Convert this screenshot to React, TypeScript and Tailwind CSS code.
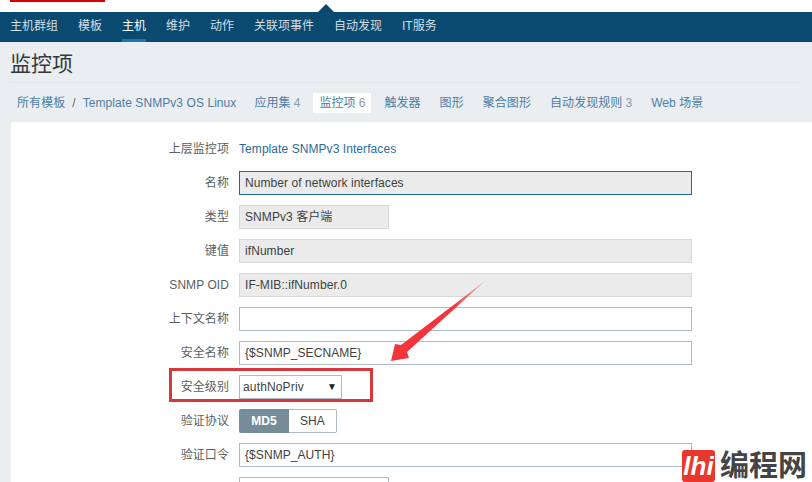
import React from "react";

const font = { fontFamily: '"Liberation Sans", "Noto Sans CJK SC", sans-serif' };

const nav = [
  { t: "主机群组", w: "w-[48px]", ml: "ml-[10px]" },
  { t: "模板", w: "w-[24px]", ml: "ml-[20px]" },
  { t: "主机", w: "w-[24px]", ml: "ml-[20px]", active: true },
  { t: "维护", w: "w-[24px]", ml: "ml-[20px]" },
  { t: "动作", w: "w-[24px]", ml: "ml-[20px]" },
  { t: "关联项事件", w: "w-[60px]", ml: "ml-[20px]" },
  { t: "自动发现", w: "w-[48px]", ml: "ml-[20px]" },
  { t: "IT服务", w: "w-[36px]", ml: "ml-[20px]" },
];

function Tab({ name, count, active }: { name: string; count?: string; active?: boolean }) {
  return (
    <span className={`flex h-[20px] items-center px-[6px] whitespace-nowrap ${active ? "bg-white" : ""}`}>
      <span className="text-[#4d7da5]">{name}</span>
      {count && <span className="ml-[3px] text-[#8a9aa6]">{count}</span>}
    </span>
  );
}

function Row({ label, children }: { label: string; children: React.ReactNode }) {
  return (
    <div className="flex h-[34px] items-center">
      <div className="w-[218px] shrink-0 text-right text-[#5a5f62]">{label}</div>
      <div className="ml-[10px] flex-1">{children}</div>
    </div>
  );
}

function Field({ value, w = "w-[453px]", ro, focus }: { value?: string; w?: string; ro?: boolean; focus?: boolean }) {
  return (
    <div
      className={`flex h-[24px] ${w} items-center border px-[5px] text-[#3b3f42] ${
        focus ? "border-[#1f6a96] bg-[#ebebeb]" : ro ? "border-[#d8d8d8] bg-[#ebebeb]" : "border-[#acbbc2] bg-white"
      }`}
    >
      {value}
    </div>
  );
}

export default function App() {
  return (
    <div className="relative h-[482px] w-[812px] overflow-hidden bg-white text-[12px] tracking-[0.07px]" style={font}>
      <div className="h-[12px] bg-white">
        <div className="ml-[10px] h-[2px] w-[95px] bg-[#d40000]" />
      </div>
      <div className="absolute left-[318px] top-[4px] h-0 w-0 border-x-[8px] border-b-[8px] border-x-transparent border-b-[#0a466b]" />

      <nav className="flex h-[30px] bg-[#0a4a70] text-[12px] tracking-normal">
        {nav.map((n) => (
          <div key={n.t} className={`${n.ml} ${n.w} relative flex shrink-0 items-center justify-start whitespace-nowrap pb-[2px] ${n.active ? "text-white" : "text-[#d3dfe7]"}`}>
            {n.t}
            {n.active && <div className="absolute bottom-0 left-0 h-[3px] w-full bg-[#1f75ac]" />}
          </div>
        ))}
      </nav>

      <div className="bg-[#ebeef0]">
        <div className="mx-[10px] flex h-[41px] items-center border-b border-[#e3e6e8] pt-[4px] text-[21px] tracking-normal text-[#333a3e]">监控项</div>
        <div className="flex h-[39px] items-center pl-[17px] pt-[1px] text-[12px]">
          <span className="text-[#4d7da5]">所有模板</span>
          <span className="mx-[7px] text-[#5a6a75]">/</span>
          <span className="text-[#4d7da5]">Template SNMPv3 OS Linux</span>
          <div className="ml-[12px] flex items-center gap-[7px]">
            <Tab name="应用集" count="4" />
            <Tab name="监控项" count="6" active />
            <Tab name="触发器" />
            <Tab name="图形" />
            <Tab name="聚合图形" />
            <Tab name="自动发现规则" count="3" />
            <Tab name="Web 场景" />
          </div>
        </div>
      </div>

      <div className="flex h-[360px]">
        <div className="w-[11px] bg-[#ebeef0]" />
        <div className="flex-1 bg-white pt-[10px]">
          <Row label="上层监控项"><span className="text-[#2a6a9d]">Template SNMPv3 Interfaces</span></Row>
          <Row label="名称"><Field value="Number of network interfaces" focus /></Row>
          <Row label="类型"><Field value="SNMPv3 客户端" w="w-[150px]" ro /></Row>
          <Row label="键值"><Field value="ifNumber" ro /></Row>
          <Row label="SNMP OID"><Field value="IF-MIB::ifNumber.0" ro /></Row>
          <Row label="上下文名称"><Field /></Row>
          <Row label="安全名称"><Field value="{$SNMP_SECNAME}" /></Row>
          <Row label="安全级别">
            <div className="flex h-[24px] w-[103px] items-center justify-between border border-[#acbbc2] bg-white pl-[3px] pr-[4px] text-[#3b3f42]">
              <span className="tracking-[0.15px]">authNoPriv</span>
              <span className="text-[10px] leading-none text-[#222]">▼</span>
            </div>
          </Row>
          <Row label="验证协议">
            <div className="flex h-[24px] w-[98px]">
              <div className="flex w-[50px] items-center justify-center rounded-l-[2px] bg-[#768d99] font-bold text-white">MD5</div>
              <div className="flex flex-1 items-center justify-center rounded-r-[2px] border border-l-0 border-[#acbbc2] text-[#3b3f42]">SHA</div>
            </div>
          </Row>
          <Row label="验证口令"><Field value="{$SNMP_AUTH}" /></Row>
          <Row label=""><Field w="w-[150px]" /></Row>
        </div>
      </div>

      {/* annotation box */}
      <div className="absolute left-[169px] top-[368px] h-[34px] w-[204px] border-[3px] border-[#d8373c]" />

      {/* annotation arrow */}
      <svg className="absolute left-[385px] top-[275px]" width="105" height="90" viewBox="0 0 105 90">
        <defs>
          <linearGradient id="arrowFade" x1="100" y1="6" x2="70" y2="32" gradientUnits="userSpaceOnUse">
            <stop offset="0" stopColor="#f4343c" stopOpacity="0.3" />
            <stop offset="1" stopColor="#f4343c" />
          </linearGradient>
        </defs>
        <polygon points="100,6 16,70 10,69 6,86 24,83 22,77" fill="url(#arrowFade)" />
      </svg>

      {/* watermark */}
      <div className="absolute left-[682px] top-[450px] flex items-center tracking-normal">
        <div className="flex h-[32px] w-[33px] items-center justify-center rounded-[3px] bg-[#e8372c] text-[26px] font-bold italic leading-none text-white">
          lhi
        </div>
        <span className="ml-[5px] whitespace-nowrap text-[29px] font-bold leading-none text-[#444444]">编程网</span>
      </div>
    </div>
  );
}
